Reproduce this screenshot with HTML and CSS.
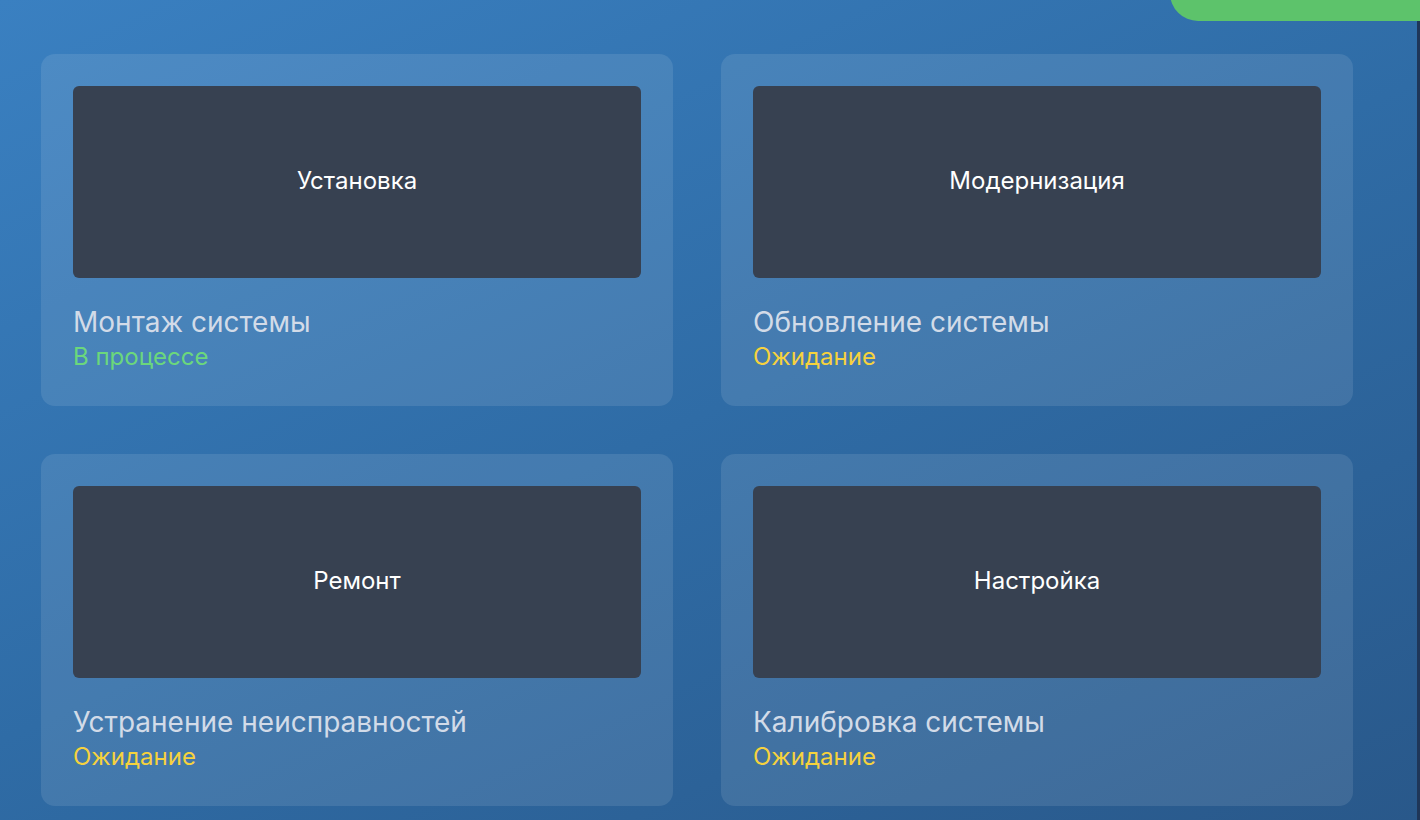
FILE: index.html
```html
<!DOCTYPE html>
<html lang="ru">
<head>
<meta charset="utf-8">
<title>Задачи</title>
<link rel="stylesheet" href="styles.css">
</head>
<body>
<div class="page">
  <div class="edge"></div>
  <a class="action-btn">Новая задача</a>
  <div class="grid">
    <div class="card">
      <div class="thumb">Установка</div>
      <div class="title">Монтаж системы</div>
      <div class="status progress">В процессе</div>
    </div>
    <div class="card">
      <div class="thumb">Модернизация</div>
      <div class="title">Обновление системы</div>
      <div class="status waiting">Ожидание</div>
    </div>
    <div class="card">
      <div class="thumb">Ремонт</div>
      <div class="title">Устранение неисправностей</div>
      <div class="status waiting">Ожидание</div>
    </div>
    <div class="card">
      <div class="thumb">Настройка</div>
      <div class="title">Калибровка системы</div>
      <div class="status waiting">Ожидание</div>
    </div>
  </div>
</div>
</body>
</html>
```

FILE: styles.css
```css
html, body {
  margin: 0;
  padding: 0;
  height: 100%;
  overflow: hidden;
}
body {
  font-family: Inter, "Noto Sans", sans-serif;
}
.page {
  position: relative;
  min-height: 100vh;
  box-sizing: border-box;
  padding: 54px 0 0 41px;
  background: linear-gradient(155deg, #3a80c1 0%, #2f6ca6 50%, #29588a 100%);
}
.edge {
  position: absolute;
  top: 0;
  right: 0;
  width: 3px;
  height: 100%;
  background: #1f3658;
}
.action-btn {
  position: absolute;
  top: -40px;
  right: 0;
  width: 250px;
  height: 61px;
  border-radius: 0 0 0 28px;
  background: #5dc36b;
  color: #fff;
  font-size: 18px;
  font-weight: 600;
  line-height: 20px;
  display: flex;
  align-items: flex-end;
  justify-content: center;
  padding-bottom: 22px;
  box-sizing: border-box;
}
.grid {
  display: grid;
  grid-template-columns: 632px 632px;
  gap: 48px;
}
.card {
  height: 352px;
  box-sizing: border-box;
  padding: 32px;
  border-radius: 14px;
  background: rgba(255, 255, 255, 0.1);
}
.thumb {
  height: 192px;
  box-sizing: border-box;
  padding-bottom: 3px;
  border-radius: 6px;
  background: #374151;
  color: #fff;
  font-size: 24px;
  font-weight: 400;
  display: flex;
  align-items: center;
  justify-content: center;
}
.title {
  margin-top: 28px;
  font-size: 28px;
  line-height: 32px;
  color: #d2dbe8;
}
.status {
  margin-top: 5px;
  font-size: 24px;
  line-height: 28px;
  font-weight: 400;
}
.progress { color: #6bd77c; }
.waiting { color: #f6d23d; }
```
